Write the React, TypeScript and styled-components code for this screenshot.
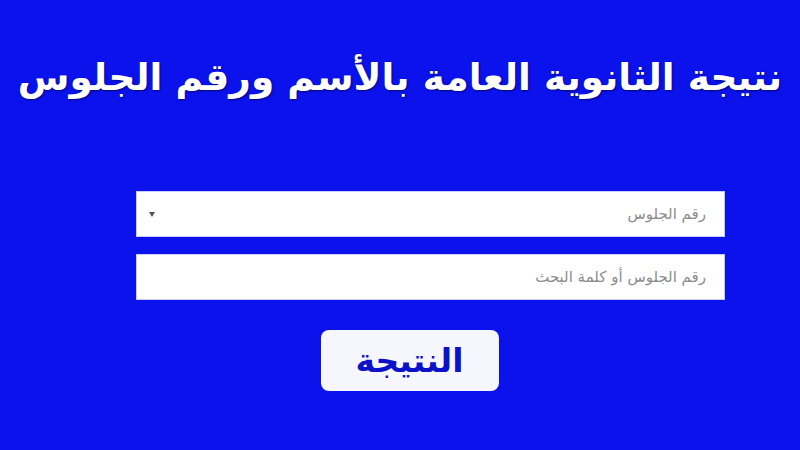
import styled, { createGlobalStyle } from "styled-components";

const GlobalStyle = createGlobalStyle`
  html, body {
    margin: 0;
    padding: 0;
    background: #0b12ec;
  }
  body {
    font-family: "DejaVu Sans", "Noto Sans", sans-serif;
  }
`;

const Page = styled.div`
  width: 800px;
  height: 450px;
  background: #0b12ec;
  display: flex;
  flex-direction: column;
  align-items: center;
  overflow: hidden;
`;

const Title = styled.h1`
  margin: 50px 0 0;
  color: #ffffff;
  font-size: 37.5px;
  font-weight: 700;
  line-height: 54px;
  direction: rtl;
  text-shadow: 1px 1px 2px rgba(0, 0, 40, 0.6);
  white-space: nowrap;
`;

const Form = styled.form`
  margin-top: 87px;
  margin-left: 61px;
  width: 589px;
  display: flex;
  flex-direction: column;
  align-items: center;
  gap: 17px;
`;

const Field = styled.div`
  width: 100%;
  height: 46px;
  box-sizing: border-box;
  background: #ffffff;
  border: 1px solid #c9ccf6;
  display: flex;
  align-items: center;
  justify-content: space-between;
  direction: rtl;
  padding: 0 18px 0 12px;
`;

const Placeholder = styled.span`
  color: #8c8c8c;
  font-size: 15px;
`;

const Caret = styled.span`
  width: 0;
  height: 0;
  border-left: 3px solid transparent;
  border-right: 3px solid transparent;
  border-top: 5px solid #555;
`;

const Submit = styled.button`
  margin-top: 13px;
  margin-left: -42px;
  width: 178px;
  height: 61px;
  border: none;
  border-radius: 8px;
  background: #f6f6ff;
  color: #0b12c8;
  font-family: "DejaVu Sans", sans-serif;
  font-size: 33px;
  font-weight: 700;
  direction: rtl;
  cursor: pointer;
`;

export default function App() {
  return (
    <Page>
      <GlobalStyle />
      <Title>نتيجة الثانوية العامة بالأسم ورقم الجلوس</Title>
      <Form onSubmit={(e) => e.preventDefault()}>
        <Field>
          <Placeholder>رقم الجلوس</Placeholder>
          <Caret />
        </Field>
        <Field>
          <Placeholder>رقم الجلوس أو كلمة البحث</Placeholder>
        </Field>
        <Submit type="submit">النتيجة</Submit>
      </Form>
    </Page>
  );
}
